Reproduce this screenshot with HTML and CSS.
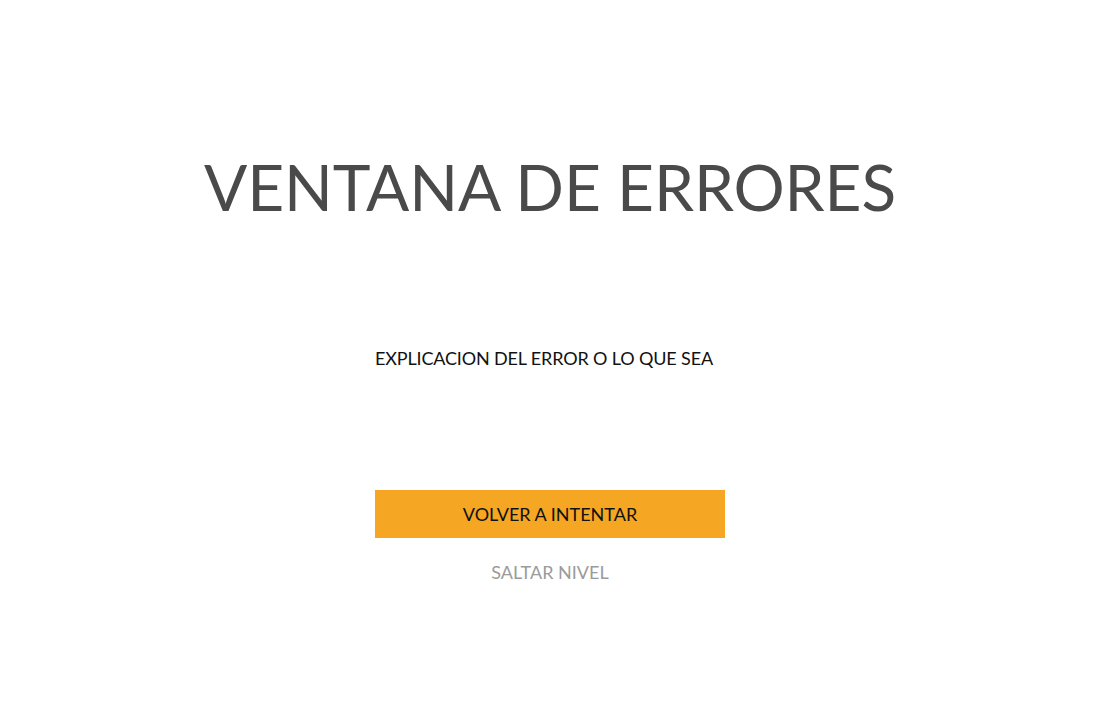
FILE: index.html
```html
<!DOCTYPE html>
<html lang="es">
<head>
<meta charset="utf-8">
<title>Ventana de errores</title>
<link rel="stylesheet" href="styles.css">
</head>
<body>
<main class="screen">
  <h1 class="title">VENTANA DE ERRORES</h1>
  <div class="panel">
    <p class="message">EXPLICACION DEL ERROR O LO QUE SEA</p>
    <button class="retry" type="button">VOLVER A INTENTAR</button>
    <a class="skip" href="#">SALTAR NIVEL</a>
  </div>
</main>
</body>
</html>
```

FILE: styles.css
```css
html, body {
  margin: 0;
  padding: 0;
  background: #ffffff;
}

body {
  font-family: Lato, "Open Sans", "Liberation Sans", sans-serif;
  width: 1100px;
  height: 720px;
  overflow: hidden;
}

.screen {
  display: flex;
  flex-direction: column;
  align-items: center;
  padding-top: 149px;
}

.title {
  margin: 0;
  font-size: 64px;
  font-weight: 400;
  line-height: 1.2;
  color: #4a4a4a;
  letter-spacing: -0.1px;
}

.panel {
  width: 350px;
  display: flex;
  flex-direction: column;
  margin-top: 122px;
}

.message {
  margin: 0;
  font-size: 18px;
  line-height: 1.2;
  color: #111111;
  text-align: left;
  letter-spacing: -0.15px;
}

.retry {
  margin-top: 121px;
  height: 48px;
  width: 100%;
  border: none;
  background: #f5a623;
  color: #111111;
  font-family: inherit;
  font-size: 18px;
  padding: 0;
  cursor: pointer;
}

.skip {
  margin-top: 24px;
  align-self: center;
  font-size: 18px;
  line-height: 1.2;
  color: #9b9b9b;
  text-decoration: none;
}
```
